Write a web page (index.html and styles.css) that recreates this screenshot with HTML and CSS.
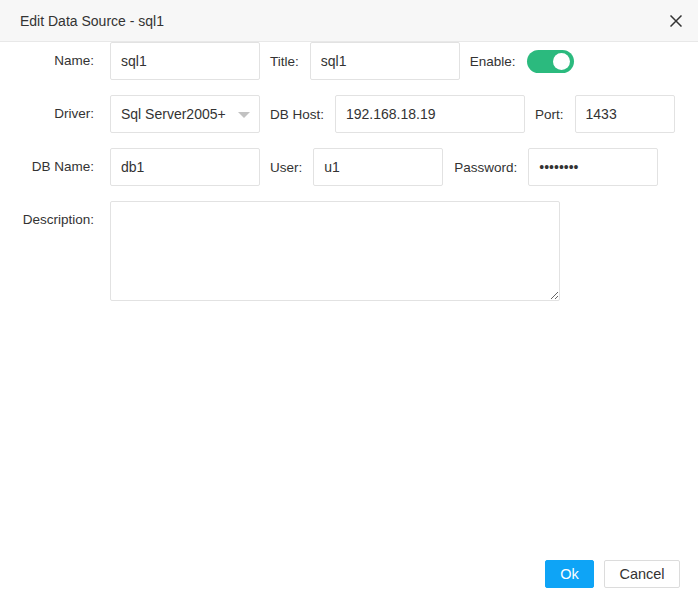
FILE: index.html
```html
<!DOCTYPE html>
<html>
<head>
<meta charset="utf-8">
<link rel="stylesheet" href="styles.css">
</head>
<body>
<div class="dialog">
  <div class="header">
    <span class="title">Edit Data Source - sql1</span>
    <svg class="close" width="12" height="12" viewBox="0 0 12 12"><path d="M0.5 0.5L11.5 11.5M11.5 0.5L0.5 11.5" stroke="#333" stroke-width="1.5" fill="none"/></svg>
  </div>
  <div class="form">
    <div class="row">
      <label class="lbl">Name:</label>
      <input class="inp w150" type="text" value="sql1">
      <label class="ilbl">Title:</label>
      <input class="inp w150" type="text" value="sql1">
      <label class="ilbl">Enable:</label>
      <span class="switch"><span class="knob"></span></span>
    </div>
    <div class="row">
      <label class="lbl">Driver:</label>
      <div class="select w150"><span>Sql Server2005+</span><span class="arrow"></span></div>
      <label class="ilbl">DB Host:</label>
      <input class="inp w190" type="text" value="192.168.18.19">
      <label class="ilbl">Port:</label>
      <input class="inp w100" type="text" value="1433">
    </div>
    <div class="row">
      <label class="lbl">DB Name:</label>
      <input class="inp w150" type="text" value="db1">
      <label class="ilbl">User:</label>
      <input class="inp w130" type="text" value="u1">
      <label class="ilbl pw">Password:</label>
      <input class="inp w130" type="password" value="12345678">
    </div>
    <div class="row tall">
      <label class="lbl">Description:</label>
      <textarea class="area"></textarea>
    </div>
  </div>
  <div class="footer">
    <button class="btn ok">Ok</button>
    <button class="btn cancel">Cancel</button>
  </div>
</div>
</body>
</html>
```
FILE: styles.css
```css
html, body {
  margin: 0;
  padding: 0;
  background: #fff;
}
body {
  font-family: "Liberation Sans", Arial, sans-serif;
  color: #333;
}
.dialog {
  width: 698px;
  height: 592px;
  display: flex;
  flex-direction: column;
  box-sizing: border-box;
}
.header {
  height: 41px;
  background: #f7f7f7;
  border-bottom: 1px solid #e8e8e8;
  display: flex;
  align-items: center;
  justify-content: space-between;
  padding: 0 16px 0 20px;
}
.title {
  font-size: 14px;
  color: #333;
}
.close {
  display: block;
}
.form {
  display: flex;
  flex-direction: column;
  gap: 15px;
}
.row {
  display: flex;
  align-items: center;
  height: 38px;
}
.row.tall {
  height: auto;
  align-items: flex-start;
}
.lbl {
  width: 94px;
  text-align: right;
  margin-right: 16px;
  font-size: 13.5px;
  line-height: 38px;
  color: #333;
}
.ilbl {
  font-size: 13.5px;
  margin: 0 11px 0 10px;
  color: #333;
}
.ilbl.pw {
  margin-left: 11px;
}
.inp, .select {
  box-sizing: border-box;
  height: 38px;
  border: 1px solid #e2e2e2;
  border-radius: 2px;
  padding: 0 10px;
  font-family: "Liberation Sans", Arial, sans-serif;
  font-size: 14px;
  color: #333;
  background: #fff;
  margin: 0;
  outline: none;
}
.w150 { width: 150px; }
.w190 { width: 190px; }
.w100 { width: 100px; }
.w130 { width: 130px; }
.select {
  display: flex;
  align-items: center;
  justify-content: space-between;
  padding-right: 9px;
}
.arrow {
  width: 0;
  height: 0;
  border-left: 6px solid transparent;
  border-right: 6px solid transparent;
  border-top: 6px solid #c2c2c2;
  margin-top: 1px;
}
.switch {
  width: 47px;
  height: 23px;
  border-radius: 12px;
  background: #2bba7e;
  display: flex;
  align-items: center;
  justify-content: flex-end;
  padding-right: 4px;
  box-sizing: border-box;
}
.knob {
  width: 17px;
  height: 17px;
  border-radius: 50%;
  background: #fff;
}
.area {
  box-sizing: border-box;
  width: 450px;
  height: 100px;
  border: 1px solid #e2e2e2;
  border-radius: 2px;
  margin: 0;
  padding: 6px 10px;
  font-family: "Liberation Sans", Arial, sans-serif;
  font-size: 14px;
  resize: both;
  outline: none;
}
.footer {
  margin-top: auto;
  display: flex;
  justify-content: flex-end;
  gap: 10px;
  padding: 0 18px 4px 0;
}
.btn {
  height: 28px;
  box-sizing: border-box;
  font-family: "Liberation Sans", Arial, sans-serif;
  font-size: 14.5px;
  border-radius: 2px;
  padding: 0;
  margin: 0;
  cursor: pointer;
}
.ok {
  width: 49px;
  background: #0ea4f6;
  border: 1px solid #0ea4f6;
  color: #fff;
}
.cancel {
  width: 76px;
  background: #fff;
  border: 1px solid #dcdcdc;
  color: #333;
}
```
